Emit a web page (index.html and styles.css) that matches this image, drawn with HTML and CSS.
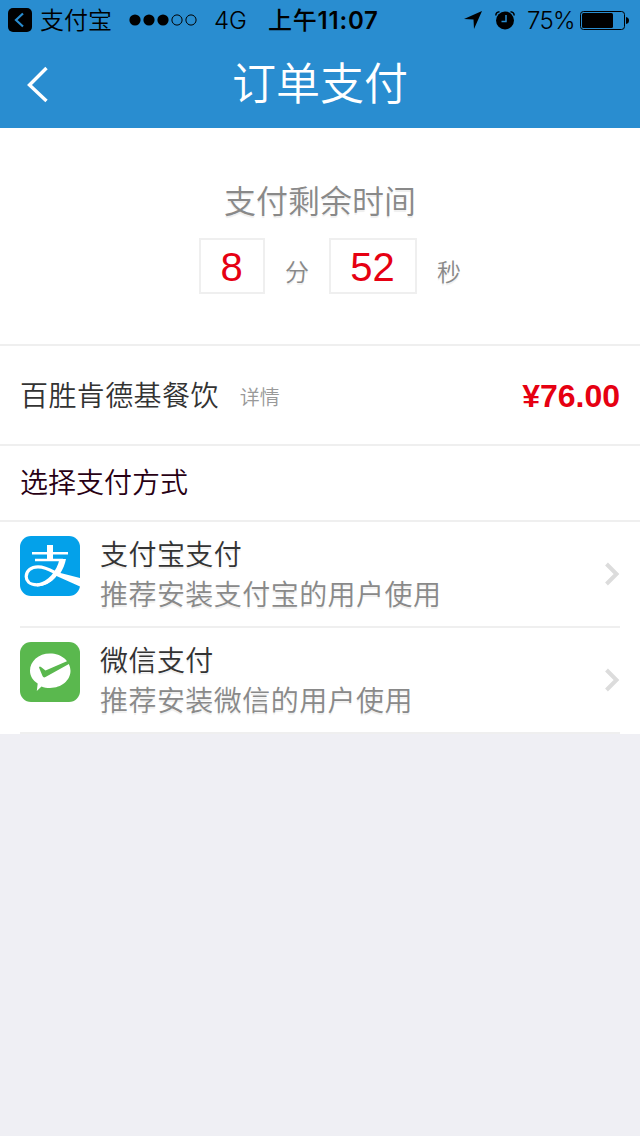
FILE: index.html
```html
<!DOCTYPE html>
<html lang="zh-CN">
<head>
<meta charset="utf-8">
<title>订单支付</title>
<link rel="stylesheet" href="styles.css">
</head>
<body>
<header class="top">
  <div class="status">
    <svg class="back-app" width="24" height="24" viewBox="0 0 24 24"><rect width="24" height="24" rx="5"/><path d="M15 5.500 8 12l7 6.500" fill="none" stroke="#298dd0" stroke-width="2.200"/></svg>
    <span class="app">支付宝</span>
    <svg class="signal" width="68" height="12" viewBox="0 0 68 12"><circle cx="6" cy="6" r="5.600"/><circle cx="20" cy="6" r="5.600"/><circle cx="34" cy="6" r="5.600"/><g fill="none" stroke="#000"><circle cx="48" cy="6" r="5.100"/><circle cx="62" cy="6" r="5.100"/></g></svg>
    <span class="network">4G</span>
    <span class="clock"><span class="cn">上午</span>11:07</span>
    <svg class="location" width="18" height="18" viewBox="0 0 18 18"><path d="M18 0 10 18 9.500 8.500 0 8Z"/></svg>
    <svg class="alarm" width="20" height="19" viewBox="0 0 20 19"><circle cx="10" cy="9.500" r="9"/><path d="M.8 4.500A4 4 0 0 1 4.500 .8M15.500 .8A4 4 0 0 1 19.200 4.500" fill="none" stroke="#000" stroke-width="1.500"/><path d="M11 4V10.500H6.500" fill="none" stroke="#298dd0" stroke-width="1.500"/></svg>
    <span class="percent">75%</span>
    <svg class="battery" width="49" height="19" viewBox="0 0 49 19"><rect x=".5" y=".5" width="44" height="18" rx="3" fill="none" stroke="#000"/><rect x="2" y="2" width="31" height="15" rx="1.500"/><path d="M46 6q3 .5 3 3.500t-3 3.500Z"/></svg>
  </div>
  <div class="nav">
    <svg class="back" width="24" height="38" viewBox="0 0 24 38"><path d="M20.500 3 3.500 20l17 16" fill="none" stroke="#fff" stroke-width="3.400"/></svg>
    <h1 class="title">订单支付</h1>
  </div>
</header>
<main class="content">
  <section class="timer">
    <p class="timer-label">支付剩余时间</p>
    <div class="countdown"><span class="digits">8</span><span class="unit">分</span><span class="digits digits-seconds">52</span><span class="unit">秒</span></div>
  </section>
  <section class="order"><span class="merchant">百胜肯德基餐饮</span><span class="detail">详情</span><span class="price">¥76.00</span></section>
  <h2 class="choose">选择支付方式</h2>
  <ul class="methods">
    <li class="method">
      <svg class="logo" width="60" height="60" viewBox="0 0 60 60"><rect width="60" height="60" rx="11" fill="#03a1ea"/><g fill="none" stroke="#fff"><path d="M30 9v15" stroke-width="6"/><path d="M12 17.200h36M15 24h28" stroke-width="2.400"/><path d="M35 39.500C30.500 45 25 48.800 17 48.800 9 48.800 6.200 44.500 6.200 40.500c0-6 5-9.700 11.800-9.700 7 0 11.500 2.700 18 6.200" stroke-width="3.200"/></g><path d="M39.500 23h6.500c-1 5-3 10-5.500 14L60 42v8.500L36.500 40C31.500 46 25 50.200 17 50.400v-3C28 46 37 35 39.500 23Z" fill="#fff"/></svg>
      <div class="method-text"><p class="name">支付宝支付</p><p class="hint">推荐安装支付宝的用户使用</p></div>
      <svg class="arrow" width="16" height="24" viewBox="0 0 16 24"><path d="m2.500 2 10 10-10 10" fill="none" stroke="#dcdcdc" stroke-width="4"/></svg>
    </li>
    <li class="method">
      <svg class="logo" width="60" height="60" viewBox="0 0 60 60"><rect width="60" height="60" rx="11" fill="#5ab84e"/><path d="M30 11.500c11.500 0 20.500 7.800 20.500 17.300S41.500 46 30 46c-3 0-6-.5-8.500-1.500L16.800 49l.9-7.500C12.800 38.500 10 34 10 28.800 10 19.300 18.500 11.500 30 11.500Z" fill="#fff"/><path d="M19 25.500q.5-1.600 2-.6l4.500 3.600 22.500-9.800 1.800 2.800L25.500 35q-2 1.200-3-1Z" fill="#5ab84e"/></svg>
      <div class="method-text"><p class="name">微信支付</p><p class="hint">推荐安装微信的用户使用</p></div>
      <svg class="arrow" width="16" height="24" viewBox="0 0 16 24"><path d="m2.500 2 10 10-10 10" fill="none" stroke="#dcdcdc" stroke-width="4"/></svg>
    </li>
  </ul>
</main>
</body>
</html>
```
FILE: styles.css
```css
* { box-sizing: border-box; }
body, h1, h2, p, ul { margin: 0; padding: 0; }
body { min-height: 1136px; background: #efeff4; font-family: "Liberation Sans", "Noto Sans CJK SC", sans-serif; font-weight: 350; }
svg { display: block; flex: none; }
.top { height: 128px; background: #298dd0; }
.status { display: flex; align-items: center; height: 40px; padding-left: 8px; font: 350 24px/40px Inter, "Noto Sans CJK SC", sans-serif; white-space: nowrap; }
.app { width: 72px; margin: 2px 0 0 8px; }
.signal { margin-left: 17px; }
.network { width: 33px; margin: 2px 0 0 17px; }
.clock { width: 110px; margin: 2px 0 0 21px; font-weight: 600; letter-spacing: .8px; }
.clock .cn { font-weight: 500; }
.location { margin-left: 86px; }
.alarm { margin-left: 13px; }
.percent { width: 47px; margin: 2px 0 0 12px; letter-spacing: -.7px; }
.battery { margin-left: 6px; }
.nav { display: grid; grid-template-columns: 60px 1fr 60px; align-items: center; height: 88px; }
.back { margin: -1px 0 0 26px; }
.title { color: #fff; font-size: 44px; font-weight: 350; line-height: 66px; text-align: center; margin-top: 2px; }
.content { background: #fff; }
.timer { height: 218px; padding-top: 50px; border-bottom: 2px solid #efefef; color: #898989; }
.timer-label { font-size: 32px; line-height: 48px; text-align: center; text-shadow: 0 2px 1px #eee; }
.countdown { display: flex; margin: 12px 0 0 199px; }
.digits { width: 66px; height: 56px; padding-right: 1px; border: 2px solid #efefef; color: #e60012; font-size: 40px; line-height: 54px; text-align: center; }
.digits-seconds { width: 88px; }
.unit { width: 64px; padding-left: 20px; font-size: 24px; line-height: 69px; height: 56px; text-shadow: 0 2px 1px #eee; }
.order { display: flex; align-items: center; height: 100px; padding: 0 20px; border-bottom: 2px solid #efefef; }
.merchant { margin-top: -2px; color: #333; font-size: 28px; letter-spacing: .4px; }
.detail { margin: 3px 0 0 21px; color: #999; font-size: 20px; }
.price { margin: 2px 0 0 auto; color: #e60012; font-size: 32px; font-weight: 700; }
.choose { height: 76px; padding-left: 20px; border-bottom: 2px solid #efefef; color: #280014; font-size: 28px; font-weight: 350; line-height: 76px; }
.methods { list-style: none; padding: 0 20px; }
.method { display: flex; height: 106px; padding-top: 14px; border-bottom: 2px solid #efefef; }
.method-text { flex: 1; margin-left: 20px; font-size: 28px; line-height: 40px; letter-spacing: .45px; }
.name { color: #333; text-shadow: 0 2px 1px #eee; }
.hint { color: #898989; text-shadow: 0 2px 1px #eee; }
.arrow { margin-top: 26px; }
```
